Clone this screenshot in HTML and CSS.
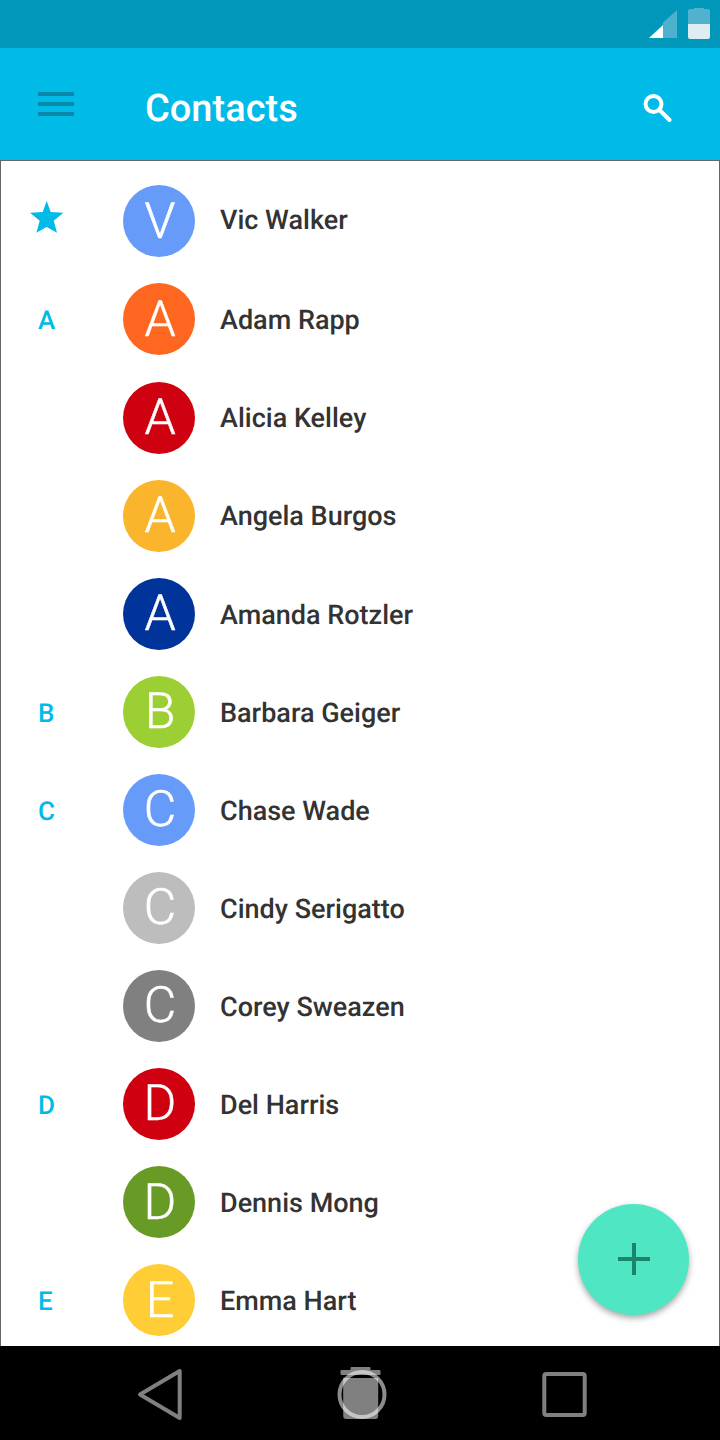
FILE: index.html
```html
<!DOCTYPE html>
<html lang="en">
<head>
<meta charset="utf-8">
<title>Contacts</title>
<link rel="stylesheet" href="styles.css">
</head>
<body>
<div class="phone">
  <div class="status">
    <svg class="signal" width="28" height="28" viewBox="0 0 28 28">
      <polygon class="sig-dim" points="14,9.5 28,-3 28,25 14,25"/>
      <polygon class="sig-on" points="0,25 14,12 14,25"/>
    </svg>
    <svg class="battery" width="22" height="32" viewBox="0 0 22 32">
      <path class="bat-dim" d="M6 0h10v1h4a2 2 0 0 1 2 2v13H0V3a2 2 0 0 1 2-2h4z"/>
      <path class="bat-on" d="M0 16h22v13a2 2 0 0 1-2 2H2a2 2 0 0 1-2-2z"/>
    </svg>
  </div>
  <header class="appbar">
    <div class="menu"><span></span><span></span><span></span></div>
    <h1 class="title">Contacts</h1>
    <svg class="search" width="32" height="32" viewBox="0 0 32 32">
      <circle cx="11.500" cy="14" r="8"/>
      <line x1="17.500" y1="20" x2="27.500" y2="30"/>
    </svg>
  </header>
  <main class="list">
    <div class="row row-first"><div class="idx"><svg class="star" width="34" height="34" viewBox="0 0 34 34"><polygon points="16.700,0 20.700,11 33.400,11.700 23.700,19.800 27,31.700 16.700,26 6.400,31.700 9.700,19.800 0,11.700 12.700,11"/></svg></div><div class="av c-blue">V</div><div class="name">Vic Walker</div></div>
    <div class="row"><div class="idx">A</div><div class="av c-orange">A</div><div class="name">Adam Rapp</div></div>
    <div class="row"><div class="idx"></div><div class="av c-red">A</div><div class="name">Alicia Kelley</div></div>
    <div class="row"><div class="idx"></div><div class="av c-amber">A</div><div class="name">Angela Burgos</div></div>
    <div class="row"><div class="idx"></div><div class="av c-navy">A</div><div class="name">Amanda Rotzler</div></div>
    <div class="row"><div class="idx">B</div><div class="av c-lime">B</div><div class="name">Barbara Geiger</div></div>
    <div class="row"><div class="idx">C</div><div class="av c-blue">C</div><div class="name">Chase Wade</div></div>
    <div class="row"><div class="idx"></div><div class="av c-silver">C</div><div class="name">Cindy Serigatto</div></div>
    <div class="row"><div class="idx"></div><div class="av c-gray">C</div><div class="name">Corey Sweazen</div></div>
    <div class="row"><div class="idx">D</div><div class="av c-red">D</div><div class="name">Del Harris</div></div>
    <div class="row"><div class="idx"></div><div class="av c-green">D</div><div class="name">Dennis Mong</div></div>
    <div class="row"><div class="idx">E</div><div class="av c-yellow">E</div><div class="name">Emma Hart</div></div>
    <button class="fab" aria-label="Add"><svg width="32" height="32" viewBox="0 0 32 32"><path d="M14 0h4v14h14v4H18v14h-4V18H0v-4h14z"/></svg></button>
  </main>
  <nav class="navbar">
    <svg class="nav-ico" width="46" height="54" viewBox="0 0 46 54"><polygon class="ns" points="42.700,4 42.700,51 3,27.500"/></svg>
    <div class="home">
      <svg width="52" height="54" viewBox="0 0 52 54">
        <rect class="hf" x="13.500" y="0" width="20" height="4" rx="1"/>
        <rect class="hf" x="3.500" y="3" width="40" height="5" rx="1"/>
        <path class="hf" d="M6.200 11h35v38a3 3 0 0 1-3 3h-29a3 3 0 0 1-3-3z"/>
        <circle class="hc" cx="25" cy="27.500" r="22.500"/>
      </svg>
    </div>
    <svg class="nav-ico" width="46" height="46" viewBox="0 0 46 46"><rect class="ns" x="2.300" y="3" width="40.400" height="41" rx="2"/></svg>
  </nav>
</div>
</body>
</html>
```
FILE: styles.css
```css
* { box-sizing: border-box; }
html, body { margin: 0; padding: 0; }
body { width: 720px; height: 1440px; overflow: hidden; font-family: Roboto, "Liberation Sans", sans-serif; background: #fff; text-rendering: geometricPrecision; }
.phone { width: 720px; height: 1440px; display: flex; flex-direction: column; }
.status { height: 48px; flex: none; background: #0097bb; display: flex; align-items: flex-start; justify-content: flex-end; padding: 8px 10px 0 0; gap: 11px; }
.signal { margin-top: 5px; overflow: visible; }
.sig-dim { fill: #4db0cc; }
.sig-on { fill: #fff; }
.bat-dim { fill: #52b1cd; }
.bat-on { fill: #dcedf4; }
.appbar { height: 112px; flex: none; background: #00bbe8; display: flex; align-items: center; padding: 0 46px 0 38px; }
.menu { width: 36px; display: flex; flex-direction: column; gap: 6px; }
.menu span { display: block; height: 4px; background: #0a88aa; }
.title { margin: 10px 0 0 71px; flex: 1; font-size: 38px; font-weight: 500; color: #fff; line-height: 1; }
.search { margin-top: 4px; fill: none; stroke: #fff; stroke-width: 4; stroke-linecap: round; }
.list { position: relative; height: 1186px; flex: none; border: 1px solid #666; border-bottom: 0; padding-top: 11.4px; overflow: hidden; background: #fff; }
.row { height: 98.07px; display: flex; align-items: center; }
.idx { width: 122px; flex: none; font-size: 26px; font-weight: 500; color: #00bbe8; padding: 4px 0 0 37px; }
.star { display: block; margin: -10px 0 0 -8px; fill: #00bbe8; }
.av { width: 72px; height: 72px; flex: none; border-radius: 50%; color: #fff; font-size: 50px; font-weight: 300; -webkit-text-stroke: 0.5px currentColor; padding: 1px 0 0 2px; display: flex; align-items: center; justify-content: center; line-height: 1; }
.name { margin-left: 25px; padding-top: 1.7px; font-size: 27px; font-weight: 500; color: #333; }
.row-first .name { padding-top: 0; margin-top: -2px; }
.c-blue { background: #679bfa; }
.c-orange { background: #ff6620; }
.c-red { background: #cf000f; }
.c-amber { background: #fab52d; }
.c-navy { background: #00349a; }
.c-lime { background: #9bcf33; }
.c-silver { background: #bdbdbd; }
.c-gray { background: #808080; }
.c-green { background: #689a26; }
.c-yellow { background: #ffcd36; }
.fab { position: absolute; left: 577px; top: 1043px; width: 111px; height: 111px; border: 0; padding: 0; border-radius: 50%; background: #4fe6c3; box-shadow: 0 3px 6px rgba(0,0,0,.35); display: flex; align-items: center; justify-content: center; }
.fab svg { display: block; margin: -1px 0 0 1px; }
.fab path { fill: #1b8469; }
.navbar { position: relative; height: 94px; flex: none; background: #000; display: flex; align-items: center; justify-content: space-between; padding: 2px 132px 0 137px; }
.ns { fill: none; stroke: #808080; stroke-width: 4; stroke-linejoin: round; }
.home svg { display: block; overflow: visible; }
.hf { fill: #808080; }
.hc { fill: none; stroke: rgba(255,255,255,.55); stroke-width: 4; }
```
